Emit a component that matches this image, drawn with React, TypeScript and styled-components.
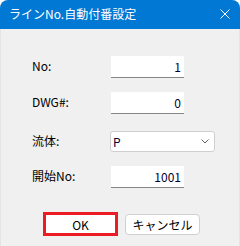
import React from "react";
import styled, { createGlobalStyle } from "styled-components";

const Global = createGlobalStyle`
  html, body { margin: 0; padding: 0; background: #ffffff; }
  body { font-family: "Noto Sans CJK JP", "Noto Sans", sans-serif; }
`;

const Dialog = styled.div`
  width: 240px;
  height: 246px;
  display: flex;
  flex-direction: column;
  background: #f0f0f0;
  border-radius: 8px 8px 0 0;
  overflow: hidden;
  box-sizing: border-box;
`;

const TitleBar = styled.div`
  height: 29px;
  flex: none;
  background: #0078d4;
  display: flex;
  align-items: center;
  justify-content: space-between;
  padding: 0 10px 0 9px;
  color: #ffffff;
  font-size: 12px;
`;

const Title = styled.span`
  line-height: 1;
  margin-top: -1px;
`;

const Close = styled.svg`
  width: 10px;
  height: 10px;
  display: block;
  margin-top: -2px;
`;

const Body = styled.div`
  flex: 1;
  display: flex;
  flex-direction: column;
  padding: 27px 0 0 32px;
  border-left: 1px solid #e4e4e4;
  border-right: 1px solid #e4e4e4;
`;

const Row = styled.div<{ $gap: number }>`
  display: grid;
  grid-template-columns: 79px auto;
  align-items: center;
  margin-top: ${(p) => p.$gap}px;
`;

const Label = styled.span`
  font-size: 12px;
  color: #000;
  line-height: 1;
  margin-left: -1px;
  margin-bottom: 2px;
`;

const Field = styled.div`
  width: 73px;
  height: 22px;
  box-sizing: border-box;
  background: #fff;
  border-bottom: 1px solid #868686;
  display: flex;
  align-items: center;
  justify-content: flex-end;
  padding-right: 3px;
  font-size: 12px;
  color: #000033;
  margin-left: -1px;
`;

const Combo = styled.div`
  width: 105px;
  height: 21px;
  box-sizing: border-box;
  background: #fff;
  border: 1px solid #cfcfcf;
  border-radius: 3px;
  margin-left: -2px;
  display: flex;
  align-items: center;
  justify-content: space-between;
  padding: 0 5px 0 2px;
  font-size: 12px;
  color: #000033;
`;

const Chevron = styled.svg`
  width: 8px;
  height: 5px;
  display: block;
`;

const Buttons = styled.div`
  display: flex;
  align-items: flex-start;
  margin-top: 24px;
  padding-left: 10px;
  gap: 7px;
`;

const Button = styled.div<{ $primary?: boolean }>`
  width: 75px;
  height: ${(p) => (p.$primary ? 24 : 21)}px;
  margin-top: ${(p) => (p.$primary ? 0 : 2)}px;
  box-sizing: border-box;
  background: #fff;
  border: ${(p) => (p.$primary ? "3px solid #ec1c24" : "1px solid #d0d0d0")};
  border-radius: ${(p) => (p.$primary ? 0 : 4)}px;
  display: flex;
  align-items: center;
  justify-content: center;
  font-size: 12px;
  color: #000;
`;

export default function App() {
  return (
    <>
      <Global />
      <Dialog>
        <TitleBar>
          <Title>ラインNo.自動付番設定</Title>
          <Close viewBox="0 0 10 10">
            <path d="M0.5 0.5 L9.5 9.5 M9.5 0.5 L0.5 9.5" stroke="#fff" strokeWidth="1" />
          </Close>
        </TitleBar>
        <Body>
          <Row $gap={0}>
            <Label>No:</Label>
            <Field>1</Field>
          </Row>
          <Row $gap={14}>
            <Label>DWG#:</Label>
            <Field>0</Field>
          </Row>
          <Row $gap={17}>
            <Label>流体:</Label>
            <Combo>
              <span>P</span>
              <Chevron viewBox="0 0 8 5">
                <path d="M0.5 0.5 L4 4 L7.5 0.5" stroke="#606060" strokeWidth="1" fill="none" />
              </Chevron>
            </Combo>
          </Row>
          <Row $gap={14}>
            <Label>開始No:</Label>
            <Field>1001</Field>
          </Row>
          <Buttons>
            <Button $primary>OK</Button>
            <Button>キャンセル</Button>
          </Buttons>
        </Body>
      </Dialog>
    </>
  );
}
